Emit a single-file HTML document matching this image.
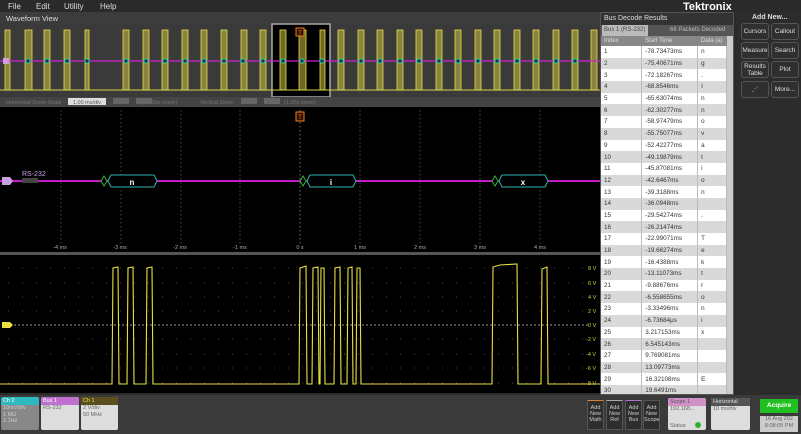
<!DOCTYPE html>
<html><head><meta charset="utf-8"><style>
*{margin:0;padding:0;box-sizing:border-box}
body{width:801px;height:434px;background:#2a2a2a;font-family:"Liberation Sans",sans-serif;overflow:hidden;position:relative;color:#fff}
.a{position:absolute}
.menu span{position:absolute;top:2px;font-size:8px;color:#ddd}
table{border-collapse:collapse;font-size:6.3px;color:#333}
td{height:11.7px;padding-left:3px;border-right:1px solid #bbb}
tr:nth-child(odd) td{background:#fff}
tr:nth-child(even) td{background:#d9d9d9}
.btn{position:absolute;width:28px;height:17px;background:#2f2f2f;border:1px solid #555;border-radius:3px;font-size:6.5px;color:#ddd;text-align:center;line-height:15px}
.card{position:absolute;top:397px;height:33px;background:#ddd;border-radius:2px;font-size:5.5px;color:#666;overflow:hidden}
.card .h{height:8px;padding-left:2px;line-height:8px}
.card div.b{padding-left:2px;line-height:6.5px}
.add{position:absolute;top:400px;width:17px;height:30px;background:#2e2e2e;border:1px solid #555;font-size:5.5px;color:#ccc;text-align:center;line-height:6px;padding-top:4px}
</style></head><body>
<div class="menu a" style="left:0;top:0;width:600px;height:12px;background:#2a2a2a">
<span style="left:8px">File</span><span style="left:36px">Edit</span><span style="left:64px">Utility</span><span style="left:100px">Help</span></div>
<div class="a" style="left:0;top:12px;width:600px;height:11px;background:#3c3c3c;font-size:7.5px;color:#ddd;padding:2px 6px">Waveform View</div>

<svg class="a" style="left:0;top:23px" width="600" height="372" viewBox="0 23 600 372">
<rect x="0" y="23" width="600" height="74" fill="#3a3a3a"/>
<rect x="272" y="24" width="58" height="73" fill="#000" stroke="#aaa" stroke-width="1.5"/>
<g stroke="#555" stroke-width="0.5" stroke-dasharray="1,2"><line x1="61" y1="25" x2="61" y2="95"/><line x1="121" y1="25" x2="121" y2="95"/><line x1="181" y1="25" x2="181" y2="95"/><line x1="240" y1="25" x2="240" y2="95"/><line x1="360" y1="25" x2="360" y2="95"/><line x1="420" y1="25" x2="420" y2="95"/><line x1="480" y1="25" x2="480" y2="95"/><line x1="540" y1="25" x2="540" y2="95"/></g>
<line x1="0" y1="90" x2="600" y2="90" stroke="#d8d040" stroke-width="1"/>
<g fill="#c8c040" fill-opacity="0.55" stroke="#e8e050" stroke-width="0.8">
<rect x="5" y="30" width="5" height="60"/><rect x="25" y="30" width="7" height="60"/><rect x="44" y="30" width="6" height="60"/><rect x="64" y="30" width="6" height="60"/><rect x="85" y="30" width="4" height="60"/><rect x="123" y="30" width="6" height="60"/><rect x="143" y="30" width="6" height="60"/><rect x="162" y="30" width="6" height="60"/><rect x="182" y="30" width="6" height="60"/><rect x="201" y="30" width="6" height="60"/><rect x="221" y="30" width="6" height="60"/><rect x="241" y="30" width="6" height="60"/><rect x="260" y="30" width="6" height="60"/><rect x="280" y="30" width="6" height="60"/><rect x="299" y="30" width="7" height="60"/><rect x="320" y="30" width="5" height="60"/><rect x="338" y="30" width="6" height="60"/><rect x="358" y="30" width="6" height="60"/><rect x="377" y="30" width="6" height="60"/><rect x="397" y="30" width="6" height="60"/><rect x="416" y="30" width="6" height="60"/><rect x="436" y="30" width="6" height="60"/><rect x="455" y="30" width="6" height="60"/><rect x="475" y="30" width="6" height="60"/><rect x="494" y="30" width="6" height="60"/><rect x="514" y="30" width="6" height="60"/><rect x="533" y="30" width="6" height="60"/><rect x="553" y="30" width="6" height="60"/><rect x="572" y="30" width="6" height="60"/><rect x="591" y="30" width="6" height="60"/>
</g>
<line x1="0" y1="61" x2="600" y2="61" stroke="#d020d0" stroke-width="1.2"/>
<g fill="#104040" stroke="#30d0b0" stroke-width="1"><circle cx="28" cy="61" r="2.2"/><circle cx="47" cy="61" r="2.2"/><circle cx="67" cy="61" r="2.2"/><circle cx="87" cy="61" r="2.2"/><circle cx="126" cy="61" r="2.2"/><circle cx="146" cy="61" r="2.2"/><circle cx="165" cy="61" r="2.2"/><circle cx="185" cy="61" r="2.2"/><circle cx="204" cy="61" r="2.2"/><circle cx="224" cy="61" r="2.2"/><circle cx="243" cy="61" r="2.2"/><circle cx="263" cy="61" r="2.2"/><circle cx="283" cy="61" r="2.2"/><circle cx="302" cy="61" r="2.2"/><circle cx="322" cy="61" r="2.2"/><circle cx="341" cy="61" r="2.2"/><circle cx="361" cy="61" r="2.2"/><circle cx="380" cy="61" r="2.2"/><circle cx="400" cy="61" r="2.2"/><circle cx="419" cy="61" r="2.2"/><circle cx="439" cy="61" r="2.2"/><circle cx="458" cy="61" r="2.2"/><circle cx="478" cy="61" r="2.2"/><circle cx="497" cy="61" r="2.2"/><circle cx="517" cy="61" r="2.2"/><circle cx="536" cy="61" r="2.2"/><circle cx="556" cy="61" r="2.2"/><circle cx="575" cy="61" r="2.2"/></g>
<rect x="3" y="58" width="6" height="6" fill="#c9a0e0"/>
<rect x="296" y="28" width="8" height="8" fill="#301000" stroke="#f08020"/>
<text x="300" y="35" font-size="6" fill="#f08020" text-anchor="middle" font-family="Liberation Sans">T</text>
<rect x="0" y="97" width="600" height="10" fill="#444"/>
<g font-size="5.5" fill="#777" font-family="Liberation Sans"><text x="6" y="104">Horizontal Zoom Scale</text><text x="142" y="104">(10.00x zoom)</text><text x="200" y="104">Vertical Zoom</text><text x="284" y="104">(1.00x zoom)</text></g>
<rect x="68" y="98" width="38" height="7" fill="#ddd"/><text x="87" y="104" font-size="5.5" fill="#555" text-anchor="middle" font-family="Liberation Sans">1.00 ms/div</text>
<rect x="113" y="98" width="16" height="6" fill="#666"/><rect x="136" y="98" width="16" height="6" fill="#666"/><rect x="241" y="98" width="16" height="6" fill="#666"/><rect x="264" y="98" width="16" height="6" fill="#666"/>
<rect x="0" y="107" width="600" height="286" fill="#000"/>
<g stroke="#777" stroke-width="0.6" stroke-dasharray="1.5,2.5"><line x1="61" y1="110" x2="61" y2="245"/><line x1="121" y1="110" x2="121" y2="245"/><line x1="181" y1="110" x2="181" y2="245"/><line x1="240" y1="110" x2="240" y2="245"/><line x1="300" y1="110" x2="300" y2="245" stroke="#bbb"/><line x1="360" y1="110" x2="360" y2="245"/><line x1="420" y1="110" x2="420" y2="245"/><line x1="480" y1="110" x2="480" y2="245"/><line x1="540" y1="110" x2="540" y2="245"/></g>
<rect x="296" y="112" width="8" height="9" fill="#301000" stroke="#f08020"/>
<text x="300" y="119" font-size="6" fill="#f08020" text-anchor="middle" font-family="Liberation Sans">T</text>
<line x1="0" y1="181" x2="600" y2="181" stroke="#e020e0" stroke-width="1.8"/>
<path d="M2 177h8l3 4-3 4h-8z" fill="#c9a0e0"/><rect x="22" y="178" width="16" height="5" fill="#444"/>
<text x="22" y="176" font-size="7" fill="#d0a0f0" font-family="Liberation Sans">RS-232</text>
<g stroke-width="1"><g fill="#000"><path d="M101 181l3-5 3 5-3 5z" stroke="#30b030"/><path d="M108 181l3-6h43l3 6-3 6h-43z" stroke="#30b0b0"/><path d="M300 181l3-5 3 5-3 5z" stroke="#30b030"/><path d="M307 181l3-6h43l3 6-3 6h-43z" stroke="#30b0b0"/><path d="M492 181l3-5 3 5-3 5z" stroke="#30b030"/><path d="M499 181l3-6h43l3 6-3 6h-43z" stroke="#30b0b0"/></g></g>
<g font-size="8" fill="#fff" font-family="Liberation Sans" font-weight="bold" text-anchor="middle"><text x="132" y="185">n</text><text x="331" y="185">i</text><text x="523" y="185">x</text></g>
<g font-size="5.5" fill="#aaa" font-family="Liberation Sans" text-anchor="middle"><text x="60" y="249">-4 ms</text><text x="120" y="249">-3 ms</text><text x="180" y="249">-2 ms</text><text x="240" y="249">-1 ms</text><text x="300" y="249">0 s</text><text x="360" y="249">1 ms</text><text x="420" y="249">2 ms</text><text x="480" y="249">3 ms</text><text x="540" y="249">4 ms</text></g>
<rect x="0" y="252" width="600" height="3" fill="#555"/>
<g stroke="#666" stroke-width="0.7" stroke-dasharray="1,13"><line x1="8" y1="268" x2="590" y2="268"/><line x1="8" y1="283" x2="590" y2="283"/><line x1="8" y1="297" x2="590" y2="297"/><line x1="8" y1="311" x2="590" y2="311"/><line x1="8" y1="339" x2="590" y2="339"/><line x1="8" y1="354" x2="590" y2="354"/><line x1="8" y1="368" x2="590" y2="368"/><line x1="8" y1="383" x2="590" y2="383"/></g>
<line x1="10" y1="325" x2="590" y2="325" stroke="#ccc" stroke-width="0.7" stroke-dasharray="2,2"/>
<path d="M0 384 L112 384 L113 268 L118 267 L119 384 L127 384 L128 268 L133 267 L134 384 L146 384 L147 268 L152 267 L153 384 L299 384 L300 268 L306 266 L307 384 L312 384 L313 268 L318 267 L319 384 L320 384 L321 268 L324 268 L325 384 L334 384 L335 268 L340 267 L341 384 L347 384 L348 268 L352 267 L353 384 L356 384 L357 268 L360 268 L361 384 L492 384 L493 267 L500 265 L517 264 L518 384 L541 384 L542 269 L547 267 L548 384 L600 384" fill="none" stroke="#e8e040" stroke-width="1.1"/>
<path d="M2 322h8l3 3-3 3h-8z" fill="#e8e040"/>
<g font-size="5.5" fill="#ddcc40" font-family="Liberation Sans"><text x="588" y="270">8 V</text><text x="588" y="285">6 V</text><text x="588" y="299">4 V</text><text x="588" y="313">2 V</text><text x="588" y="327">0 V</text><text x="586" y="341">-2 V</text><text x="586" y="356">-4 V</text><text x="586" y="370">-6 V</text><text x="586" y="385">-8 V</text></g>
</svg>

<div class="a" style="left:683px;top:1px;font-size:11px;font-weight:bold;color:#fff">Tektronix</div>
<div class="a" style="left:600px;top:12px;width:134px;height:383px;background:#333;border:1px solid #555"></div>
<div class="a" style="left:604px;top:15px;font-size:7px;color:#ddd">Bus Decode Results</div>
<div class="a" style="left:601px;top:25px;width:132px;height:11px;background:#555"></div>
<div class="a" style="left:602px;top:25px;width:46px;height:11px;background:#bbb;font-size:6px;color:#444;padding:2px">Bus 1 (RS-232)</div>
<div class="a" style="left:670px;top:27px;font-size:6px;color:#bbb">68 Packets Decoded</div>
<div class="a" style="left:601px;top:36px;width:126px;height:10px;background:#888;font-size:6px;color:#ddd"><span style="position:absolute;left:3px;top:2px">Index</span><span style="position:absolute;left:44px;top:2px">Start Time</span><span style="position:absolute;left:100px;top:2px">Data (a)</span></div>
<div class="a" style="left:727px;top:36px;width:6px;height:358px;background:#ccc"></div>
<div class="a" style="left:601px;top:46px;width:126px;height:348px;overflow:hidden;background:#fff">
<table style="width:126px"><colgroup><col style="width:41px"><col style="width:56px"><col style="width:29px"></colgroup>
<tr><td>1</td><td>-78.73473ms</td><td>n</td></tr><tr><td>2</td><td>-75.40671ms</td><td>g</td></tr><tr><td>3</td><td>-72.18267ms</td><td>.</td></tr><tr><td>4</td><td>-68.8546ms</td><td>I</td></tr><tr><td>5</td><td>-65.63074ms</td><td>n</td></tr><tr><td>6</td><td>-62.30277ms</td><td>n</td></tr><tr><td>7</td><td>-58.97479ms</td><td>o</td></tr><tr><td>8</td><td>-55.75077ms</td><td>v</td></tr><tr><td>9</td><td>-52.42277ms</td><td>a</td></tr><tr><td>10</td><td>-49.19879ms</td><td>t</td></tr><tr><td>11</td><td>-45.87081ms</td><td>i</td></tr><tr><td>12</td><td>-42.6467ms</td><td>o</td></tr><tr><td>13</td><td>-39.3188ms</td><td>n</td></tr><tr><td>14</td><td>-36.0948ms</td><td></td></tr><tr><td>15</td><td>-29.54274ms</td><td>.</td></tr><tr><td>16</td><td>-26.21474ms</td><td></td></tr><tr><td>17</td><td>-22.99071ms</td><td>T</td></tr><tr><td>18</td><td>-19.66274ms</td><td>e</td></tr><tr><td>19</td><td>-16.4388ms</td><td>k</td></tr><tr><td>20</td><td>-13.11073ms</td><td>t</td></tr><tr><td>21</td><td>-9.88676ms</td><td>r</td></tr><tr><td>22</td><td>-6.558655ms</td><td>o</td></tr><tr><td>23</td><td>-3.33496ms</td><td>n</td></tr><tr><td>24</td><td>-6.73684μs</td><td>i</td></tr><tr><td>25</td><td>3.217153ms</td><td>x</td></tr><tr><td>26</td><td>6.545143ms</td><td></td></tr><tr><td>27</td><td>9.769081ms</td><td></td></tr><tr><td>28</td><td>13.09773ms</td><td></td></tr><tr><td>29</td><td>16.32108ms</td><td>E</td></tr><tr><td>30</td><td>19.6491ms</td><td></td></tr></table></div>

<div class="a" style="left:737px;top:12px;width:64px;height:383px;background:#2c2c2c"></div>
<div class="a" style="left:752px;top:14px;font-size:7px;font-weight:bold;color:#ddd">Add New...</div>
<div class="btn" style="left:741px;top:23px">Cursors</div><div class="btn" style="left:771px;top:23px">Callout</div>
<div class="btn" style="left:741px;top:42px">Measure</div><div class="btn" style="left:771px;top:42px">Search</div>
<div class="btn" style="left:741px;top:61px;line-height:7px;padding-top:1px">Results Table</div><div class="btn" style="left:771px;top:61px">Plot</div>
<div class="btn" style="left:741px;top:81px">⋰</div><div class="btn" style="left:771px;top:81px">More...</div>

<div class="a" style="left:0;top:395px;width:801px;height:39px;background:#3a3a3a"></div>
<div class="card" style="left:1px;width:38px;background:#888"><div class="h" style="background:#30b8c0;color:#fff">Ch 2</div><div class="b" style="color:#ccc">10mV/div<br>1 MΩ<br>1.1Hz</div></div>
<div class="card" style="left:41px;width:38px"><div class="h" style="background:#c070d0;color:#fff">Bus 1</div><div class="b">RS-232</div></div>
<div class="card" style="left:81px;width:37px"><div class="h" style="background:#5a4e20;color:#e8e040">Ch 1</div><div class="b">2 V/div<br>50 MHz</div></div>
<div class="add" style="left:587px;border-top:1px solid #e08030">Add New Math</div>
<div class="add" style="left:606px;border-top:1px solid #aaa">Add New Ref</div>
<div class="add" style="left:625px;border-top:1px solid #b070d0">Add New Bus</div>
<div class="add" style="left:643px">Add New Scope</div>
<div class="card" style="left:668px;top:398px;width:38px;height:32px"><div class="h" style="background:#d090c8;color:#555">Scope 1</div><div class="b">192.168...</div><div class="b" style="position:absolute;top:25px">Status</div><div style="position:absolute;left:27px;top:24px;width:6px;height:6px;border-radius:3px;background:#30b030"></div></div>
<div class="card" style="left:711px;top:398px;width:39px;height:32px"><div class="h" style="background:#555;color:#ddd">Horizontal</div><div class="b">10 ms/div</div></div>
<div class="a" style="left:760px;top:399px;width:38px;height:14px;background:#20c020;font-size:6.5px;font-weight:bold;text-align:center;line-height:14px">Acquire</div>
<div class="a" style="left:760px;top:416px;width:38px;height:16px;background:#ccc;font-size:5.5px;color:#666;text-align:center;line-height:7px">16 Aug 202<br>8:08:05 PM</div>
</body></html>
